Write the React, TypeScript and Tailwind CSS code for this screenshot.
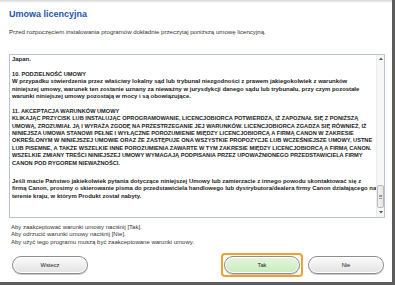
import React from "react";

type L = { t: string; caps?: boolean } | null;

const boxLines: L[] = [
  { t: "Japan." },
  null,
  { t: "10.  PODZIELNOŚĆ UMOWY", caps: true },
  { t: "W przypadku stwierdzenia przez właściwy lokalny sąd lub trybunał niezgodności z prawem jakiegokolwiek z warunków" },
  { t: "niniejszej umowy, warunek ten zostanie uznany za nieważny w jurysdykcji danego sądu lub trybunału, przy czym pozostałe" },
  { t: "warunki niniejszej umowy pozostają w mocy i są obowiązujące." },
  null,
  { t: "11.  AKCEPTACJA WARUNKÓW UMOWY", caps: true },
  { t: "KLIKAJĄC PRZYCISK LUB INSTALUJĄC OPROGRAMOWANIE, LICENCJOBIORCA POTWIERDZA, IŻ ZAPOZNAŁ SIĘ Z PONIŻSZĄ", caps: true },
  { t: "UMOWĄ, ZROZUMIAŁ JĄ I WYRAŻA ZGODĘ NA PRZESTRZEGANIE JEJ WARUNKÓW. LICENCJOBIORCA ZGADZA SIĘ RÓWNIEŻ, IŻ", caps: true },
  { t: "NINIEJSZA UMOWA STANOWI PEŁNE I WYŁĄCZNE POROZUMIENIE MIĘDZY LICENCJOBIORCĄ A FIRMĄ CANON W ZAKRESIE", caps: true },
  { t: "OKREŚLONYM W NINIEJSZEJ UMOWIE ORAZ ŻE ZASTĘPUJE ONA WSZYSTKIE PROPOZYCJE LUB WCZEŚNIEJSZE UMOWY, USTNE", caps: true },
  { t: "LUB PISEMNE, A TAKŻE WSZELKIE INNE POROZUMIENIA ZAWARTE W TYM ZAKRESIE MIĘDZY LICENCJOBIORCĄ A FIRMĄ CANON.", caps: true },
  { t: "WSZELKIE ZMIANY TREŚCI NINIEJSZEJ UMOWY WYMAGAJĄ PODPISANIA PRZEZ UPOWAŻNIONEGO PRZEDSTAWICIELA FIRMY", caps: true },
  { t: "CANON POD RYGOREM NIEWAŻNOŚCI.", caps: true },
];

const tailLines = [
  "Jeśli macie Państwo jakiekolwiek pytania dotyczące niniejszej Umowy lub zamierzacie z innego powodu skontaktować się z",
  "firmą Canon, prosimy o skierowanie pisma do przedstawiciela handlowego lub dystrybutora/dealera firmy Canon działającego na",
  "terenie kraju, w którym Produkt został nabyty.",
];

function Btn({ label, green }: { label: string; green?: boolean }) {
  return (
    <div
      className={
        "w-[76px] h-[18px] rounded-[9px] border border-[#8e8e8e] flex items-center justify-center text-[5.8px] text-[#222] shadow-[0_1px_0_#c8c8c8,inset_0_0_0_1px_#ffffff] " +
        (green
          ? "bg-gradient-to-b from-[#e4f7dc] to-[#c9eabd]"
          : "bg-gradient-to-b from-[#fbfbfb] to-[#e2e2e2]")
      }
    >
      {label}
    </div>
  );
}

export default function App() {
  return (
    <div
      className="w-[395px] h-[285px] bg-white overflow-hidden flex flex-col border-r-[3px] border-b-[3px] border-[#5c5c5c]"
      style={{ fontFamily: '"Liberation Sans", Arial, sans-serif' }}
    >
      <div className="h-[3px] bg-gradient-to-b from-[#d6d6d6] to-white shrink-0" />
      <div className="pl-[9px] pt-[6px] text-[9px] leading-[10px] font-bold text-[#2556a8]">
        Umowa licencyjna
      </div>
      <div className="pl-[9px] mt-[9px] text-[6.1px] leading-[7px] text-[#333] whitespace-nowrap">
        Przed rozpoczęciem instalowania programów dokładnie przeczytaj poniższą umowę licencyjną.
      </div>
      <div className="ml-[9px] mt-[19px] w-[376px] h-[164px] border border-[#b7c4d4] flex overflow-hidden shrink-0">
        <div className="flex-1 pl-[2px] pt-[1px] leading-[7.4px] font-bold text-[#1b1b24] whitespace-nowrap overflow-hidden">
          {boxLines.map((l, i) =>
            l === null ? (
              <div key={i} className="h-[7.4px]" />
            ) : (
              <div key={i} className={l.caps ? "text-[5.65px]" : "text-[5.95px]"}>
                {l.t}
              </div>
            )
          )}
          <div className="h-[11px]" />
          {tailLines.map((l, i) => (
            <div key={i} className="text-[5.95px]">
              {l}
            </div>
          ))}
        </div>
        <div className="w-[8px] border-l border-[#ececec] bg-[#f7f7f7] flex flex-col items-center">
          <div className="h-[7px] w-full flex items-center justify-center">
            <svg width="4" height="3" viewBox="0 0 4 3">
              <path d="M0 3 L2 0.5 L4 3 Z" fill="#555" />
            </svg>
          </div>
          <div className="flex-1" />
          <div className="w-[7px] h-[23px] rounded-[2px] border border-[#b9b9b9] bg-gradient-to-r from-[#f2f2f2] to-[#e4e4e4] flex flex-col items-center justify-center gap-[1px]">
            <div className="w-[3px] h-[0.5px] bg-[#999]" />
            <div className="w-[3px] h-[0.5px] bg-[#999]" />
            <div className="w-[3px] h-[0.5px] bg-[#999]" />
          </div>
          <div className="h-[9px] w-full flex items-center justify-center">
            <svg width="4" height="3" viewBox="0 0 4 3">
              <path d="M0 0 L4 0 L2 2.5 Z" fill="#555" />
            </svg>
          </div>
        </div>
      </div>
      <div className="pl-[11px] mt-[6px] text-[6px] leading-[7.3px] text-[#333] whitespace-nowrap">
        <div>Aby zaakceptować warunki umowy naciśnij [Tak].</div>
        <div>Aby odrzucić warunki umowy naciśnij [Nie].</div>
        <div>Aby użyć tego programu muszą być zaakceptowane warunki umowy.</div>
      </div>
      <div className="flex items-center pl-[12px] pr-[8px] mt-[7px]">
        <Btn label="Wstecz" />
        <div className="flex-1" />
        <div className="p-[1px] border-[2px] border-[#f0a030] rounded-[4px]">
          <Btn label="Tak" green />
        </div>
        <div className="w-[5px]" />
        <Btn label="Nie" />
      </div>
    </div>
  );
}
